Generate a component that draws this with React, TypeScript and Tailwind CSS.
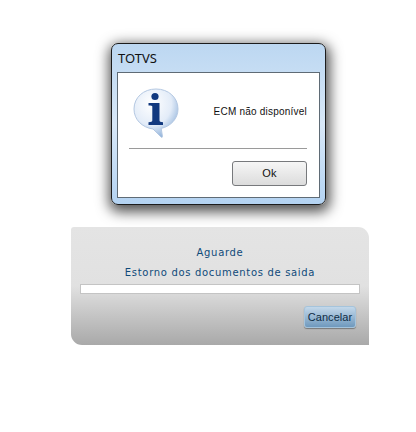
export default function App() {
  return (
    <div className="w-[416px] h-[432px] bg-white overflow-hidden flex flex-col pt-[43px]">
      <div className="ml-[111px] w-[215px] h-[162px] rounded-[7px] border border-[#1c1c1c] bg-gradient-to-b from-[#bcd7f1] via-[#d8e8f8] to-[#b4d3f2] shadow-[1px_4px_13px_3px_rgba(0,0,0,0.68)] flex flex-col px-[5px] pb-[6px]">
        <div className="h-[28px] flex items-center pl-[1px] pt-[1px] text-[13px] text-[#111] font-['Noto_Sans',sans-serif]">TOTVS</div>
        <div className="flex-1 bg-white border border-[#5f6b75] flex flex-col pl-[11px] pr-[12px]">
          <div className="h-[75px] flex items-start">
            <svg width="46" height="50" viewBox="0 0 46 50" className="ml-[4px] mt-[15px] shrink-0">
              <defs>
                <radialGradient id="b" cx="0.4" cy="0.3" r="0.75">
                  <stop offset="0" stopColor="#ffffff" />
                  <stop offset="0.6" stopColor="#e3ecf8" />
                  <stop offset="1" stopColor="#8aaed8" />
                </radialGradient>
              </defs>
              <path d="M23 1C10.5 1 1 9.5 1 21c0 10.5 8 18.5 19 20l8 8c1 .8 1.6.2 1.4-1l-1.2-7.6C38 38.2 45 30.5 45 21 45 9.5 35.5 1 23 1Z" fill="url(#b)" stroke="#b4c8e2" strokeWidth="1" />
              <circle cx="22" cy="8.5" r="3.6" fill="#12397f" />
              <path d="M15.5 15h11v17.5c0 1 1 1.5 3.5 1.7V37H15.5v-2.8c2.6-.2 3.8-.7 3.8-1.7V18.5c0-.9-1.2-1-3.8-1Z" fill="#12397f" />
            </svg>
            <div className="flex-1 text-right pt-[32px] text-[10px] leading-[13px] tracking-[0.22px] text-[#111] font-['Liberation_Sans',sans-serif]">ECM não disponível</div>
          </div>
          <div className="h-px bg-[#9a9a9a]" />
          <div className="flex justify-end pt-[12px]">
            <button className="w-[75px] h-[25px] rounded-[3px] border border-[#77797c] bg-gradient-to-b from-[#f6f6f6] to-[#dcdcdc] text-[11px] tracking-[0.3px] text-[#111] font-['Liberation_Sans',sans-serif]">Ok</button>
          </div>
        </div>
      </div>
      <div className="ml-[71px] mt-[22px] w-[298px] h-[118px] rounded-tr-[11px] rounded-bl-[11px] rounded-tl-[3px] bg-gradient-to-b from-[#e4e4e4] via-[#e1e1e1] via-50% to-[#a9a9a9] flex flex-col px-[9px] font-['DejaVu_Sans',sans-serif] text-[#0f4a7a] text-[10px] tracking-[0.68px]">
        <div className="text-center pt-[19px] leading-[13px]">Aguarde</div>
        <div className="text-center pt-[7px] leading-[13px]">Estorno dos documentos de saida</div>
        <div className="mt-[5px] h-[10px] bg-white border border-[#c4c4c4]" />
        <div className="flex justify-end pt-[12px] pr-[4px]">
          <button className="w-[52px] h-[22px] rounded-[3px] border border-[#a5c4dc] bg-gradient-to-b from-[#c3d8ea] to-[#6f99bd] text-[11px] tracking-[0.05px] text-[#0f2c44] font-['Liberation_Sans',sans-serif] shadow-[0_1px_1px_rgba(0,0,0,0.35)]">Cancelar</button>
        </div>
      </div>
    </div>
  );
}
